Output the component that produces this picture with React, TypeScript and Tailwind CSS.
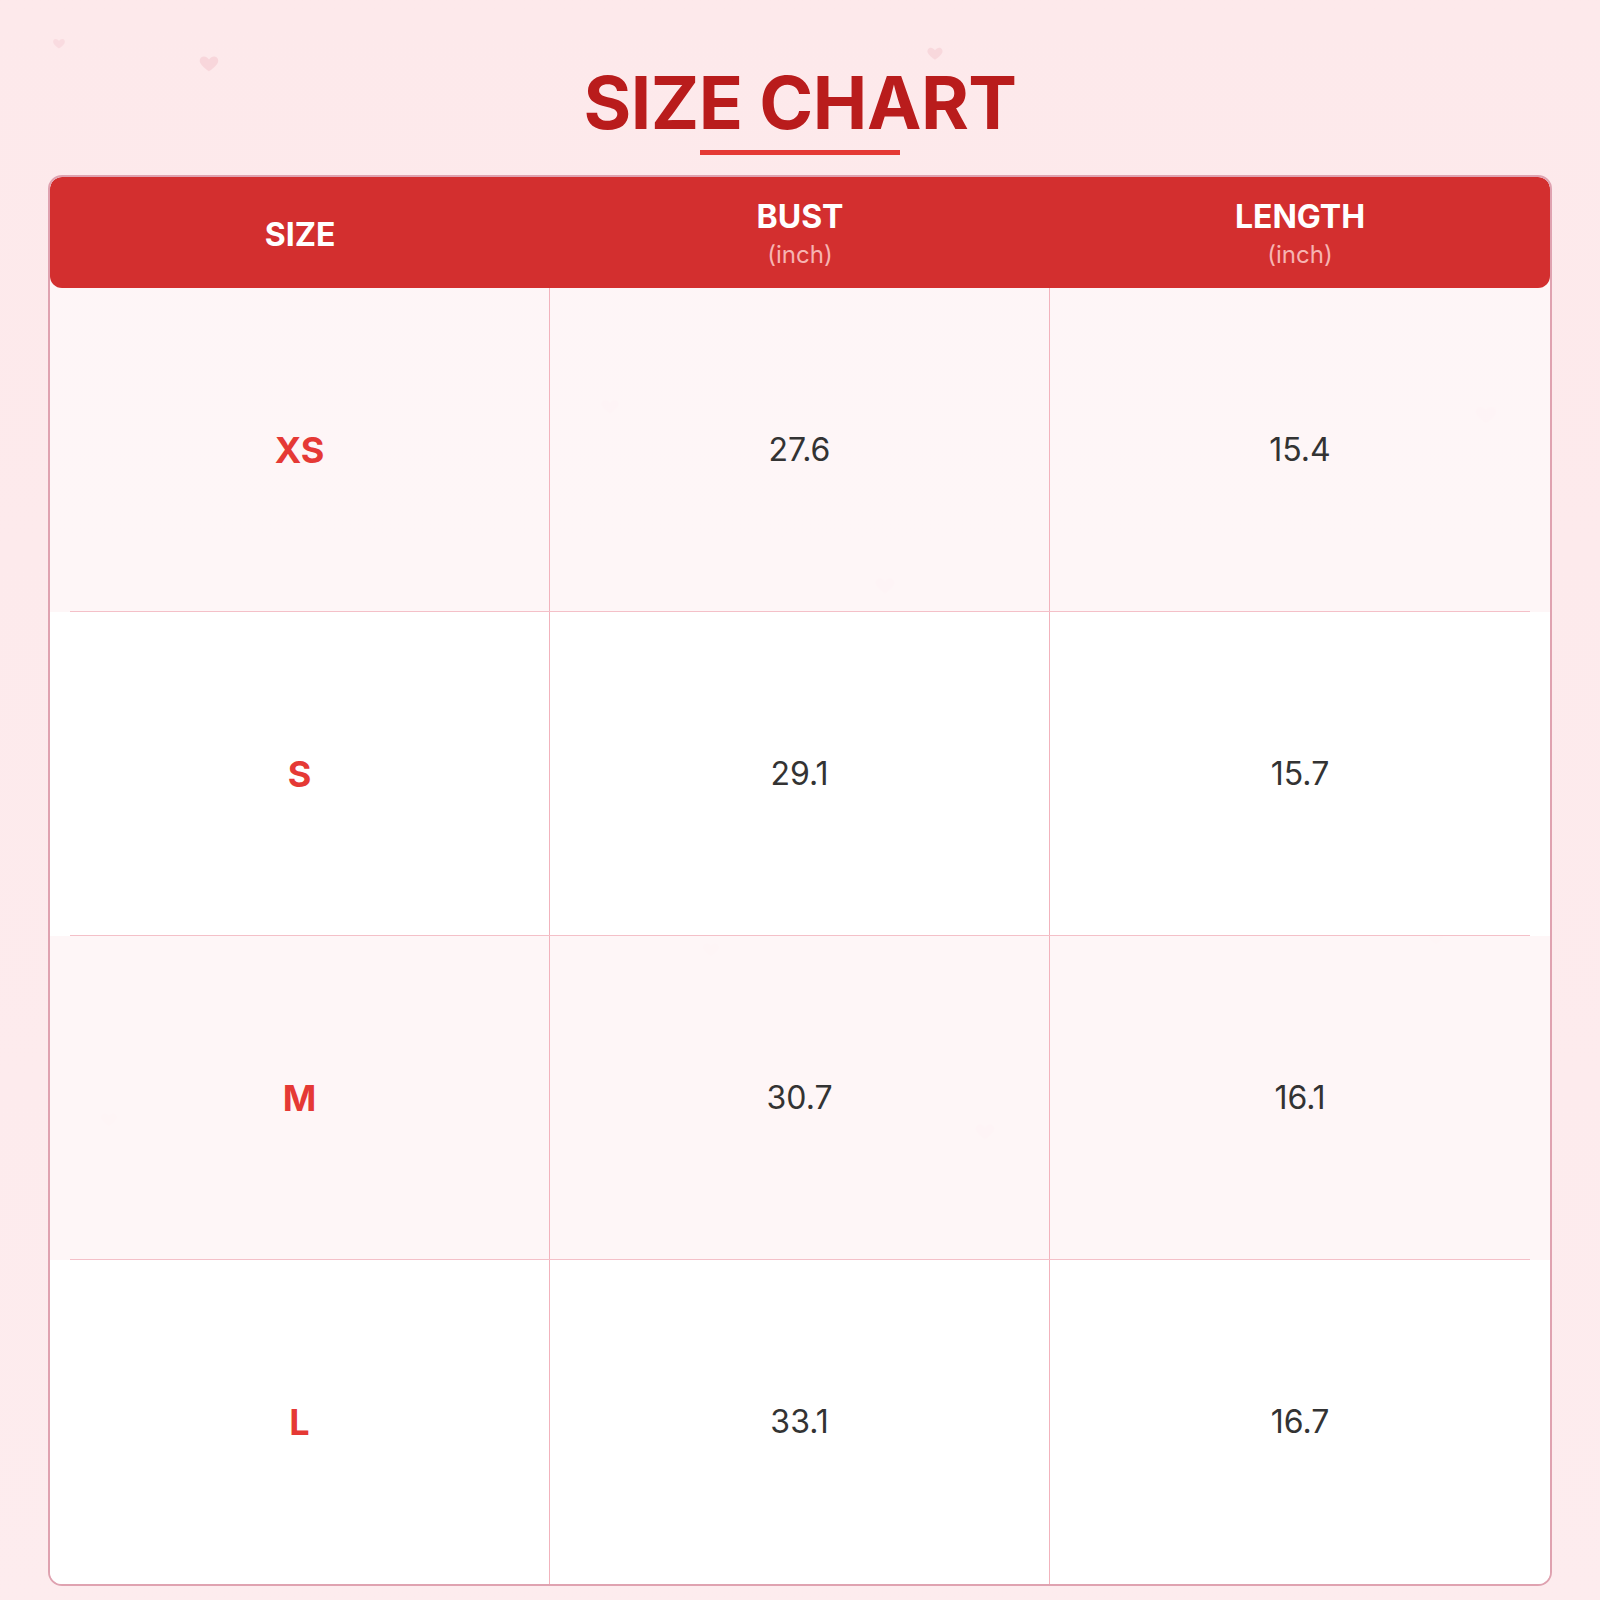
import React from "react";

const hearts: { x: number; y: number; s: number; o: number }[] = [
  { x: 52, y: 36, s: 14, o: 0.35 },
  { x: 198, y: 52, s: 22, o: 0.5 },
  { x: 926, y: 44, s: 18, o: 0.45 },
  { x: 600, y: 396, s: 20, o: 0.35 },
  { x: 1474, y: 402, s: 24, o: 0.35 },
  { x: 874, y: 574, s: 22, o: 0.35 },
  { x: 100, y: 1110, s: 18, o: 0.3 },
  { x: 702, y: 940, s: 18, o: 0.3 },
  { x: 974, y: 1120, s: 22, o: 0.35 },
  { x: 1428, y: 930, s: 16, o: 0.3 },
];

function Heart({ x, y, s, o }: { x: number; y: number; s: number; o: number }) {
  return (
    <svg
      className="absolute pointer-events-none"
      style={{ left: x, top: y, width: s, height: s, opacity: o }}
      viewBox="0 0 24 24"
    >
      <path
        d="M12 21s-7.5-4.6-9.6-9.2C1 8.6 3 5 6.4 5c2.2 0 3.8 1.3 5.6 3.3C13.8 6.3 15.4 5 17.6 5 21 5 23 8.6 21.6 11.8 19.5 16.4 12 21 12 21z"
        fill="#f4c4cc"
      />
    </svg>
  );
}

const rows = [
  { size: "XS", bust: "27.6", length: "15.4" },
  { size: "S", bust: "29.1", length: "15.7" },
  { size: "M", bust: "30.7", length: "16.1" },
  { size: "L", bust: "33.1", length: "16.7" },
];

export default function App() {
  return (
    <div className="relative w-[1600px] h-[1600px] overflow-hidden bg-gradient-to-b from-[#fde9eb] to-[#fdecee] font-['Inter',sans-serif]">
      {hearts.map((h, i) => (
        <Heart key={i} {...h} />
      ))}
      <div className="relative flex flex-col items-center pt-[66px]">
        <h1 className="text-[73px] leading-none font-bold tracking-[-0.5px] text-[#b91c1c]">SIZE CHART</h1>
        <div className="mt-[11px] w-[200px] h-[5px] bg-[#e53935]" />
      </div>
      <div className="relative mx-12 mt-[20px] border-2 border-[#dfa2b0] rounded-[14px] overflow-hidden bg-white/60">
        <div className="grid grid-cols-3 h-[111px] bg-[#d32f2f] rounded-[12px] text-white">
          <div className="flex items-center justify-center pt-[4px] text-[32px] font-bold">SIZE</div>
          <div className="flex flex-col items-center justify-center pt-[4px]">
            <span className="text-[32px] font-bold leading-[40px]">BUST</span>
            <span className="text-[24px] leading-[36px] text-[#f7b4b2]">(inch)</span>
          </div>
          <div className="flex flex-col items-center justify-center pt-[4px]">
            <span className="text-[32px] font-bold leading-[40px]">LENGTH</span>
            <span className="text-[24px] leading-[36px] text-[#f7b4b2]">(inch)</span>
          </div>
        </div>
        {rows.map((r, i) => (
          <div
            key={r.size}
            className={`relative grid grid-cols-3 h-[324px] ${i % 2 === 0 ? "bg-[#fef5f6]/80" : "bg-white"} ${
              i < rows.length - 1
                ? "after:absolute after:left-5 after:right-5 after:bottom-0 after:h-px after:bg-[#f4c0c8]"
                : ""
            }`}
          >
            <div className="flex items-center justify-center border-r border-[#f2b3bd] text-[36px] font-bold text-[#e53935]">
              {r.size}
            </div>
            <div className="flex items-center justify-center border-r border-[#f2b3bd] text-[32px] text-[#333333]">
              {r.bust}
            </div>
            <div className="flex items-center justify-center text-[32px] text-[#333333]">{r.length}</div>
          </div>
        ))}
      </div>
    </div>
  );
}
